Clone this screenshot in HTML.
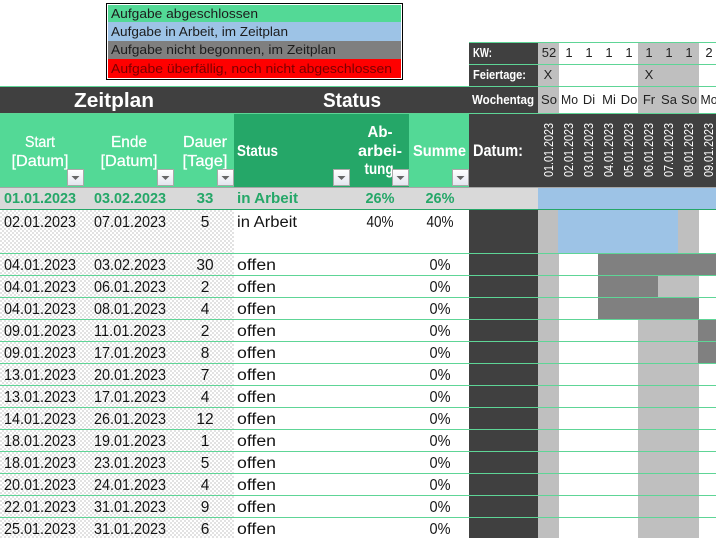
<!DOCTYPE html>
<html><head><meta charset="utf-8">
<style>
html,body{margin:0;padding:0;background:#fff;width:716px;height:538px;overflow:hidden}
svg{display:block;font-family:"Liberation Sans",sans-serif}
rect{shape-rendering:crispEdges}
.t{font-size:15.5px;fill:#141414}
.m{text-anchor:middle}
.b{font-size:15px;font-weight:bold;fill:#25a768}
.h{font-size:16px;fill:#fff;text-anchor:middle;stroke:#fff;stroke-width:.25px}
.hb{font-size:16px;font-weight:bold;fill:#fff}
.l{font-size:12.5px;fill:#1c1c1c}
.s{font-size:12.5px;font-weight:bold;fill:#fff}
.n{font-size:13px;fill:#222;text-anchor:middle}
.d{font-size:12.5px;fill:#fff}
.g{fill:#5ed596}
.w{fill:#bfbfbf}
.a{fill:#808080}
</style></head><body>
<svg width="716" height="538" viewBox="0 0 716 538" xmlns="http://www.w3.org/2000/svg">
<defs>
<pattern id="c" width="4" height="4" patternUnits="userSpaceOnUse">
<rect width="4" height="4" fill="#fff"/><rect width="2" height="2" fill="#e2e2e2"/><rect x="2" y="2" width="2" height="2" fill="#e2e2e2"/>
</pattern>
<linearGradient id="fb" x1="0" y1="0" x2="0" y2="1"><stop offset="0" stop-color="#fff"/><stop offset="1" stop-color="#e4e6f0"/></linearGradient>
<g id="f"><rect x="0" y="0" width="17" height="17" fill="#a9a9a9"/><rect x="1" y="1" width="15" height="15" fill="url(#fb)"/><polygon points="4.5,7 12.5,7 8.5,11" fill="#666"/></g>
</defs>

<!-- legend -->
<rect x="106" y="3" width="297" height="77" fill="#000"/>
<rect x="107" y="4" width="295" height="75" fill="#fff"/>
<rect x="108" y="5" width="293" height="17" fill="#53d996"/>
<rect x="108" y="22" width="293" height="19" fill="#9dc3e6"/>
<rect x="108" y="41" width="293" height="18" fill="#7f7f7f"/>
<rect x="108" y="59" width="293" height="19" fill="#ff0000"/>
<text class="l" x="111" y="18" textLength="147" lengthAdjust="spacingAndGlyphs">Aufgabe abgeschlossen</text>
<text class="l" x="111" y="36" textLength="177" lengthAdjust="spacingAndGlyphs">Aufgabe in Arbeit, im Zeitplan</text>
<text class="l" x="111" y="54" textLength="225" lengthAdjust="spacingAndGlyphs">Aufgabe nicht begonnen, im Zeitplan</text>
<text class="l" x="111" y="73" textLength="281" lengthAdjust="spacingAndGlyphs" style="fill:#7a0000">Aufgabe überfällig, noch nicht abgeschlossen</text>

<!-- top table -->
<rect x="469" y="42" width="69" height="146" fill="#404040"/>
<rect x="538" y="43" width="21" height="70" class="w"/>
<rect x="638" y="43" width="61" height="70" class="w"/>
<rect x="469" y="114" width="247" height="74" fill="#404040"/>

<!-- header bands -->
<rect x="0" y="87" width="538" height="26" fill="#404040"/>
<rect x="0" y="113" width="469" height="75" fill="#53d996"/>
<rect x="234" y="114" width="175" height="73" fill="#25a768"/>
<rect x="469" y="42" width="247" height="1" class="g"/>
<rect x="469" y="64" width="247" height="1" class="g"/>
<rect x="0" y="86" width="716" height="1" class="g"/>
<rect x="0" y="113" width="716" height="1" class="g"/>

<!-- body bg -->
<rect x="0" y="210" width="234" height="328" fill="url(#c)"/>
<rect x="469" y="210" width="69" height="328" fill="#404040"/>
<rect x="538" y="210" width="21" height="328" class="w"/>
<rect x="638" y="319" width="61" height="219" class="w"/>
<rect x="678" y="210" width="21" height="43" class="w"/>
<rect x="658" y="275" width="41" height="22" class="w"/>

<!-- summary row -->
<rect x="0" y="187" width="716" height="1" fill="#a6a6a6"/>
<rect x="0" y="188" width="538" height="21" fill="#d9d9d9"/>
<rect x="538" y="188" width="178" height="21" fill="#9dc3e6"/>
<rect x="0" y="209" width="716" height="1" fill="#25a768"/>

<!-- bars -->
<rect x="558" y="210" width="120" height="43" fill="#9dc3e6"/>
<rect x="598" y="253" width="118" height="22" class="a"/>
<rect x="598" y="275" width="60" height="22" class="a"/>
<rect x="598" y="297" width="101" height="22" class="a"/>
<rect x="698" y="319" width="18" height="44" class="a"/>

<!-- row lines -->
<rect x="0" y="253" width="716" height="1" class="g"/>
<rect x="0" y="275" width="716" height="1" class="g"/>
<rect x="0" y="297" width="716" height="1" class="g"/>
<rect x="0" y="319" width="716" height="1" class="g"/>
<rect x="0" y="341" width="716" height="1" class="g"/>
<rect x="0" y="363" width="716" height="1" class="g"/>
<rect x="0" y="385" width="716" height="1" class="g"/>
<rect x="0" y="407" width="716" height="1" class="g"/>
<rect x="0" y="429" width="716" height="1" class="g"/>
<rect x="0" y="451" width="716" height="1" class="g"/>
<rect x="0" y="473" width="716" height="1" class="g"/>
<rect x="0" y="495" width="716" height="1" class="g"/>
<rect x="0" y="517" width="716" height="1" class="g"/>

<!-- top table text -->
<text class="s" x="473" y="57" textLength="19" lengthAdjust="spacingAndGlyphs">KW:</text>
<text class="s" x="473" y="79" textLength="53" lengthAdjust="spacingAndGlyphs">Feiertage:</text>
<text class="s" x="472" y="104" textLength="62" lengthAdjust="spacingAndGlyphs">Wochentag</text>
<text class="n" x="549" y="57">52</text><text class="n" x="569" y="57">1</text><text class="n" x="589" y="57">1</text><text class="n" x="609" y="57">1</text><text class="n" x="629" y="57">1</text><text class="n" x="649" y="57">1</text><text class="n" x="669" y="57">1</text><text class="n" x="689" y="57">1</text><text class="n" x="709" y="57">2</text>
<text class="n" x="548" y="79">X</text><text class="n" x="649" y="79">X</text>
<text class="n" x="549" y="104">So</text><text class="n" x="569.5" y="104" textLength="17" lengthAdjust="spacingAndGlyphs">Mo</text><text class="n" x="589" y="104">Di</text><text class="n" x="609" y="104">Mi</text><text class="n" x="629" y="104">Do</text><text class="n" x="649" y="104">Fr</text><text class="n" x="669" y="104">Sa</text><text class="n" x="689" y="104">So</text><text class="n" x="709" y="104" textLength="17" lengthAdjust="spacingAndGlyphs">Mo</text>

<!-- titles -->
<text x="114" y="107" text-anchor="middle" style="font-size:20.5px;font-weight:bold;fill:#fff" textLength="80" lengthAdjust="spacingAndGlyphs">Zeitplan</text>
<text x="352" y="107" text-anchor="middle" style="font-size:20.5px;font-weight:bold;fill:#fff" textLength="58" lengthAdjust="spacingAndGlyphs">Status</text>

<!-- column headers -->
<text class="h" x="40" y="147" textLength="30" lengthAdjust="spacingAndGlyphs">Start</text>
<text class="h" x="40" y="166" textLength="57" lengthAdjust="spacingAndGlyphs">[Datum]</text>
<text class="h" x="129" y="147" textLength="36" lengthAdjust="spacingAndGlyphs">Ende</text>
<text class="h" x="129" y="166" textLength="57" lengthAdjust="spacingAndGlyphs">[Datum]</text>
<text class="h" x="205" y="147" textLength="44" lengthAdjust="spacingAndGlyphs">Dauer</text>
<text class="h" x="205" y="166" textLength="45" lengthAdjust="spacingAndGlyphs">[Tage]</text>
<text class="hb" x="237" y="156" textLength="41" lengthAdjust="spacingAndGlyphs">Status</text>
<text class="hb m" x="380" y="137" textLength="25" lengthAdjust="spacingAndGlyphs">Ab-</text>
<text class="hb m" x="380" y="156" textLength="44" lengthAdjust="spacingAndGlyphs">arbei-</text>
<text class="hb m" x="379" y="174" textLength="29" lengthAdjust="spacingAndGlyphs">tung</text>
<text class="hb m" x="439.5" y="156" textLength="53" lengthAdjust="spacingAndGlyphs">Summe</text>
<text x="473" y="156" style="font-size:17px;font-weight:bold;fill:#fff" textLength="50" lengthAdjust="spacingAndGlyphs">Datum:</text>

<!-- filter buttons -->
<use href="#f" x="67" y="169"/>
<use href="#f" x="157" y="169"/>
<use href="#f" x="217" y="169"/>
<use href="#f" x="333" y="169"/>
<use href="#f" x="392" y="169"/>
<use href="#f" x="452" y="169"/>

<!-- rotated dates -->
<text class="d" transform="translate(553 177) rotate(-90)" textLength="54" lengthAdjust="spacingAndGlyphs">01.01.2023</text>
<text class="d" transform="translate(573 177) rotate(-90)" textLength="54" lengthAdjust="spacingAndGlyphs">02.01.2023</text>
<text class="d" transform="translate(593 177) rotate(-90)" textLength="54" lengthAdjust="spacingAndGlyphs">03.01.2023</text>
<text class="d" transform="translate(613 177) rotate(-90)" textLength="54" lengthAdjust="spacingAndGlyphs">04.01.2023</text>
<text class="d" transform="translate(633 177) rotate(-90)" textLength="54" lengthAdjust="spacingAndGlyphs">05.01.2023</text>
<text class="d" transform="translate(653 177) rotate(-90)" textLength="54" lengthAdjust="spacingAndGlyphs">06.01.2023</text>
<text class="d" transform="translate(673 177) rotate(-90)" textLength="54" lengthAdjust="spacingAndGlyphs">07.01.2023</text>
<text class="d" transform="translate(693 177) rotate(-90)" textLength="54" lengthAdjust="spacingAndGlyphs">08.01.2023</text>
<text class="d" transform="translate(713 177) rotate(-90)" textLength="54" lengthAdjust="spacingAndGlyphs">09.01.2023</text>

<!-- summary text -->
<text class="b" x="4" y="203" textLength="72" lengthAdjust="spacingAndGlyphs">01.01.2023</text><text class="b" x="94" y="203" textLength="72" lengthAdjust="spacingAndGlyphs">03.02.2023</text><text class="b m" x="205" y="203">33</text><text class="b" x="237" y="203" textLength="61" lengthAdjust="spacingAndGlyphs">in Arbeit</text><text class="b m" x="380" y="203" textLength="29" lengthAdjust="spacingAndGlyphs">26%</text><text class="b m" x="440" y="203" textLength="29" lengthAdjust="spacingAndGlyphs">26%</text>

<!-- rows -->
<text class="t" x="4" y="227" textLength="72" lengthAdjust="spacingAndGlyphs">02.01.2023</text><text class="t" x="94" y="227" textLength="72" lengthAdjust="spacingAndGlyphs">07.01.2023</text><text class="t m" x="205" y="227">5</text><text class="t" x="237" y="227" textLength="60" lengthAdjust="spacingAndGlyphs">in Arbeit</text><text class="t m" x="380" y="227" textLength="27" lengthAdjust="spacingAndGlyphs">40%</text><text class="t m" x="440" y="227" textLength="27" lengthAdjust="spacingAndGlyphs">40%</text>
<text class="t" x="4" y="270" textLength="72" lengthAdjust="spacingAndGlyphs">04.01.2023</text><text class="t" x="94" y="270" textLength="72" lengthAdjust="spacingAndGlyphs">03.02.2023</text><text class="t m" x="205" y="270">30</text><text class="t" x="237" y="270" textLength="39" lengthAdjust="spacingAndGlyphs">offen</text><text class="t m" x="440" y="270" textLength="21" lengthAdjust="spacingAndGlyphs">0%</text>
<text class="t" x="4" y="292" textLength="72" lengthAdjust="spacingAndGlyphs">04.01.2023</text><text class="t" x="94" y="292" textLength="72" lengthAdjust="spacingAndGlyphs">06.01.2023</text><text class="t m" x="205" y="292">2</text><text class="t" x="237" y="292" textLength="39" lengthAdjust="spacingAndGlyphs">offen</text><text class="t m" x="440" y="292" textLength="21" lengthAdjust="spacingAndGlyphs">0%</text>
<text class="t" x="4" y="314" textLength="72" lengthAdjust="spacingAndGlyphs">04.01.2023</text><text class="t" x="94" y="314" textLength="72" lengthAdjust="spacingAndGlyphs">08.01.2023</text><text class="t m" x="205" y="314">4</text><text class="t" x="237" y="314" textLength="39" lengthAdjust="spacingAndGlyphs">offen</text><text class="t m" x="440" y="314" textLength="21" lengthAdjust="spacingAndGlyphs">0%</text>
<text class="t" x="4" y="336" textLength="72" lengthAdjust="spacingAndGlyphs">09.01.2023</text><text class="t" x="94" y="336" textLength="72" lengthAdjust="spacingAndGlyphs">11.01.2023</text><text class="t m" x="205" y="336">2</text><text class="t" x="237" y="336" textLength="39" lengthAdjust="spacingAndGlyphs">offen</text><text class="t m" x="440" y="336" textLength="21" lengthAdjust="spacingAndGlyphs">0%</text>
<text class="t" x="4" y="358" textLength="72" lengthAdjust="spacingAndGlyphs">09.01.2023</text><text class="t" x="94" y="358" textLength="72" lengthAdjust="spacingAndGlyphs">17.01.2023</text><text class="t m" x="205" y="358">8</text><text class="t" x="237" y="358" textLength="39" lengthAdjust="spacingAndGlyphs">offen</text><text class="t m" x="440" y="358" textLength="21" lengthAdjust="spacingAndGlyphs">0%</text>
<text class="t" x="4" y="380" textLength="72" lengthAdjust="spacingAndGlyphs">13.01.2023</text><text class="t" x="94" y="380" textLength="72" lengthAdjust="spacingAndGlyphs">20.01.2023</text><text class="t m" x="205" y="380">7</text><text class="t" x="237" y="380" textLength="39" lengthAdjust="spacingAndGlyphs">offen</text><text class="t m" x="440" y="380" textLength="21" lengthAdjust="spacingAndGlyphs">0%</text>
<text class="t" x="4" y="402" textLength="72" lengthAdjust="spacingAndGlyphs">13.01.2023</text><text class="t" x="94" y="402" textLength="72" lengthAdjust="spacingAndGlyphs">17.01.2023</text><text class="t m" x="205" y="402">4</text><text class="t" x="237" y="402" textLength="39" lengthAdjust="spacingAndGlyphs">offen</text><text class="t m" x="440" y="402" textLength="21" lengthAdjust="spacingAndGlyphs">0%</text>
<text class="t" x="4" y="424" textLength="72" lengthAdjust="spacingAndGlyphs">14.01.2023</text><text class="t" x="94" y="424" textLength="72" lengthAdjust="spacingAndGlyphs">26.01.2023</text><text class="t m" x="205" y="424">12</text><text class="t" x="237" y="424" textLength="39" lengthAdjust="spacingAndGlyphs">offen</text><text class="t m" x="440" y="424" textLength="21" lengthAdjust="spacingAndGlyphs">0%</text>
<text class="t" x="4" y="446" textLength="72" lengthAdjust="spacingAndGlyphs">18.01.2023</text><text class="t" x="94" y="446" textLength="72" lengthAdjust="spacingAndGlyphs">19.01.2023</text><text class="t m" x="205" y="446">1</text><text class="t" x="237" y="446" textLength="39" lengthAdjust="spacingAndGlyphs">offen</text><text class="t m" x="440" y="446" textLength="21" lengthAdjust="spacingAndGlyphs">0%</text>
<text class="t" x="4" y="468" textLength="72" lengthAdjust="spacingAndGlyphs">18.01.2023</text><text class="t" x="94" y="468" textLength="72" lengthAdjust="spacingAndGlyphs">23.01.2023</text><text class="t m" x="205" y="468">5</text><text class="t" x="237" y="468" textLength="39" lengthAdjust="spacingAndGlyphs">offen</text><text class="t m" x="440" y="468" textLength="21" lengthAdjust="spacingAndGlyphs">0%</text>
<text class="t" x="4" y="490" textLength="72" lengthAdjust="spacingAndGlyphs">20.01.2023</text><text class="t" x="94" y="490" textLength="72" lengthAdjust="spacingAndGlyphs">24.01.2023</text><text class="t m" x="205" y="490">4</text><text class="t" x="237" y="490" textLength="39" lengthAdjust="spacingAndGlyphs">offen</text><text class="t m" x="440" y="490" textLength="21" lengthAdjust="spacingAndGlyphs">0%</text>
<text class="t" x="4" y="512" textLength="72" lengthAdjust="spacingAndGlyphs">22.01.2023</text><text class="t" x="94" y="512" textLength="72" lengthAdjust="spacingAndGlyphs">31.01.2023</text><text class="t m" x="205" y="512">9</text><text class="t" x="237" y="512" textLength="39" lengthAdjust="spacingAndGlyphs">offen</text><text class="t m" x="440" y="512" textLength="21" lengthAdjust="spacingAndGlyphs">0%</text>
<text class="t" x="4" y="534" textLength="72" lengthAdjust="spacingAndGlyphs">25.01.2023</text><text class="t" x="94" y="534" textLength="72" lengthAdjust="spacingAndGlyphs">31.01.2023</text><text class="t m" x="205" y="534">6</text><text class="t" x="237" y="534" textLength="39" lengthAdjust="spacingAndGlyphs">offen</text><text class="t m" x="440" y="534" textLength="21" lengthAdjust="spacingAndGlyphs">0%</text>
</svg>
</body></html>
